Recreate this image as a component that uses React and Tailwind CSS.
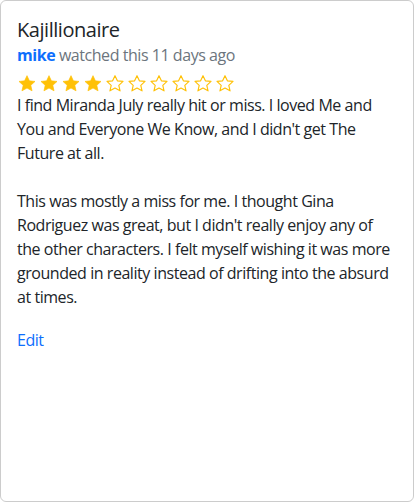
import React from 'react';

const Star = ({ filled }) => (
  <svg width="20" height="19" viewBox="0 0 24 23" className="shrink-0">
    <path
      d="M12 2l2.9 6.3 6.8.7-5.1 4.7 1.5 6.7L12 17l-6.1 3.4 1.5-6.7L2.3 9l6.8-.7z"
      fill={filled ? '#ffc107' : 'none'}
      stroke="#ffc107"
      strokeWidth={filled ? 0.8 : 1.4}
      strokeLinejoin="round"
    />
  </svg>
);

const App = () => {
  const rating = 4;

  return (
    <div className="h-[503px] w-[414px] bg-white font-['Segoe_UI','Open_Sans',sans-serif] tracking-[-0.45px] text-[#212529]">
      <div className="h-[502px] rounded-md border border-black/20 p-4">
        <h5 className="text-[20px] leading-[26px]">Kajillionaire</h5>
        <div className="text-base leading-6 text-[#6c757d]">
          <span className="font-bold text-[#0d6efd]">mike</span> watched this 11 days ago
        </div>
        <div className="mt-[7px] flex h-[19px] items-start gap-[2px]">
          {Array.from({ length: 10 }).map((_, i) => (
            <Star key={i} filled={i < rating} />
          ))}
        </div>
        <p className="mb-[19px] whitespace-pre-wrap text-base leading-6">
          {"I find Miranda July really hit or miss. I loved Me and You and Everyone We Know, and I didn't get The Future at all.\n\nThis was mostly a miss for me. I thought Gina Rodriguez was great, but I didn't really enjoy any of the other characters. I felt myself wishing it was more grounded in reality instead of drifting into the absurd at times."}
        </p>
        <a href="#" className="text-base leading-6 text-[#0d6efd]">Edit</a>
      </div>
    </div>
  );
};

export default App;
